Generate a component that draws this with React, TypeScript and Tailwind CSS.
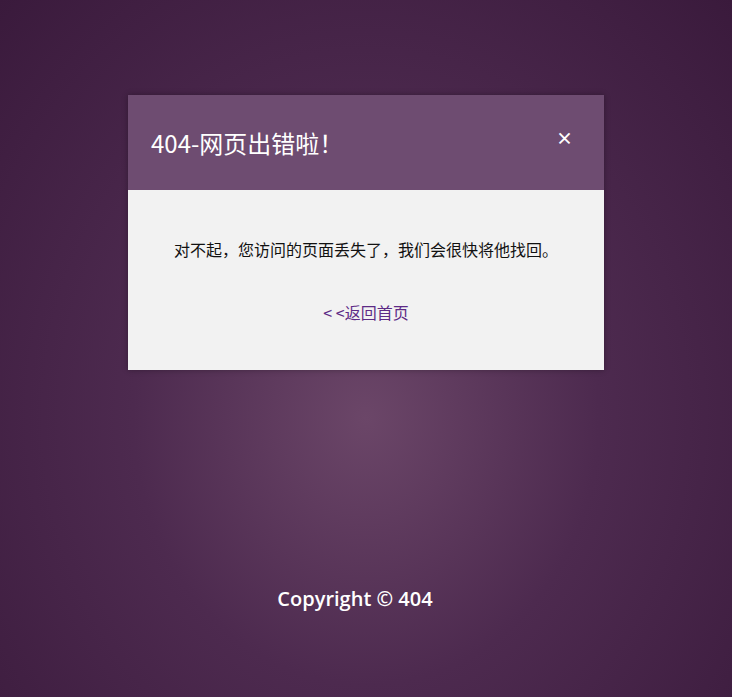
const App = () => {
  return (
    <div className="min-h-[697px] w-full flex flex-col items-center bg-[radial-gradient(ellipse_at_50%_60%,#6b4668_0%,#4d2a4f_45%,#3a1a3c_100%)] font-['Noto_Sans_CJK_SC','Noto_Sans',sans-serif]">
      <div className="mt-[95px] w-[476px] shadow-[0_0_6px_rgba(0,0,0,0.3)]">
        <div className="h-[95px] bg-[#6e4c71] flex items-center justify-between pl-[23px] pr-[31px]">
          <h1 className="text-[24px] text-white leading-none">
            404-网页出错啦<span className="inline-block w-[24px] text-center">！</span>
          </h1>
          <span className="text-white text-[17px] font-bold leading-none mb-[10px]">×</span>
        </div>
        <div className="h-[180px] bg-[#f2f2f2] flex flex-col items-center pt-[48px]">
          <p className="text-[16px] text-[#111] leading-[22px]">
            对不起，您访问的页面丢失了，我们会很快将他找回。
          </p>
          <a href="#" className="mt-[41px] text-[16px] text-[#5d2a86] leading-[22px]">
            &lt; &lt;返回首页
          </a>
        </div>
      </div>
      <div className="mt-[219px] mr-[22px] text-white text-[20px] font-semibold font-['Open_Sans',sans-serif] leading-none">
        Copyright © 404
      </div>
    </div>
  );
};

export default App;
